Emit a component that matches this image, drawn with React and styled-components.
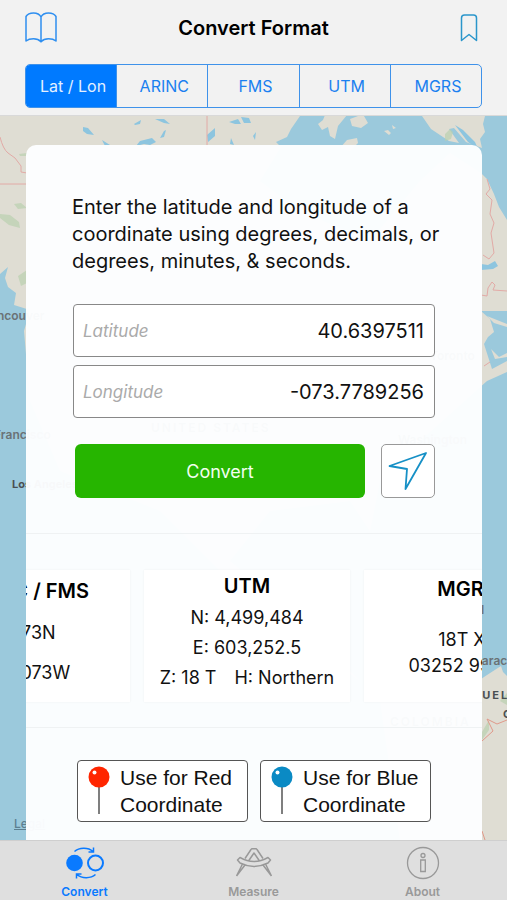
import { useState } from "react";
import styled, { createGlobalStyle } from "styled-components";

const formats = ["Lat / Lon", "ARINC", "FMS", "UTM", "MGRS"];

const results = [
  { title: "ARINC / FMS", rows: ["4073N", "40N073W"], line: 40, gap: 2, top: 1 },
  {
    title: "UTM",
    rows: ["N: 4,499,484", "E: 603,252.5", "Z: 18 T\u2003H: Northern"],
    line: 30,
    gap: 2,
    top: 1,
  },
  { title: "MGRS", rows: ["18T XL", "03252 99484"], line: 26, gap: 25, top: 6 },
];

const App = () => {
  const [format, setFormat] = useState("Lat / Lon");
  const [latitude, setLatitude] = useState("40.6397511");
  const [longitude, setLongitude] = useState("-073.7789256");
  const [tab, setTab] = useState("Convert");

  return (
    <>
      <GlobalStyle />
      <Screen>
        <Header>
          <TitleBar>
            <IconButton aria-label="Guide">
              <BookIcon />
            </IconButton>
            <h1>Convert Format</h1>
            <IconButton $end aria-label="Bookmarks">
              <BookmarkIcon />
            </IconButton>
          </TitleBar>
          <Segments>
            {formats.map((name) => (
              <Segment
                key={name}
                $active={name === format}
                aria-pressed={name === format}
                onClick={() => setFormat(name)}
              >
                {name}
              </Segment>
            ))}
          </Segments>
        </Header>
        <Content>
          <Map />
          <Legal href="#legal">Legal</Legal>
          <Card>
            <Form onSubmit={(e) => e.preventDefault()}>
              <Intro>
                Enter the latitude and longitude of a coordinate using degrees,
                decimals, or degrees, minutes, &amp; seconds.
              </Intro>
              <Field>
                <label htmlFor="latitude">Latitude</label>
                <input
                  id="latitude"
                  value={latitude}
                  onChange={(e) => setLatitude(e.target.value)}
                />
              </Field>
              <Field>
                <label htmlFor="longitude">Longitude</label>
                <input
                  id="longitude"
                  value={longitude}
                  onChange={(e) => setLongitude(e.target.value)}
                />
              </Field>
              <Actions>
                <ConvertButton type="submit">Convert</ConvertButton>
                <LocateButton type="button" aria-label="Use my location">
                  <ArrowIcon />
                </LocateButton>
              </Actions>
            </Form>
            <Results>
              {results.map((result) => (
                <Result
                  key={result.title}
                  $line={result.line}
                  $gap={result.gap}
                  $top={result.top}
                >
                  <h2>{result.title}</h2>
                  {result.rows.map((row) => (
                    <p key={row}>{row}</p>
                  ))}
                </Result>
              ))}
            </Results>
            <Pins>
              <PinButton>
                <PinIcon color="#ff2600" />
                <span>Use for Red Coordinate</span>
              </PinButton>
              <PinButton>
                <PinIcon color="#0a8ac4" />
                <span>Use for Blue Coordinate</span>
              </PinButton>
            </Pins>
          </Card>
        </Content>
        <TabBar>
          <Tab $active={tab === "Convert"} onClick={() => setTab("Convert")}>
            <ConvertIcon />
            Convert
          </Tab>
          <Tab $active={tab === "Measure"} onClick={() => setTab("Measure")}>
            <MeasureIcon />
            Measure
          </Tab>
          <Tab $active={tab === "About"} onClick={() => setTab("About")}>
            <AboutIcon />
            About
          </Tab>
        </TabBar>
      </Screen>
    </>
  );
};

//Icons
const BookIcon = () => (
  <svg width="32" height="32" fill="none" stroke="#2f8ff0" strokeWidth="1.5" strokeLinejoin="round">
    <path d="M16 5C14.500 2 12 1 8.500 1S2.500 2 1 4.500V29c2-1.700 4.500-2.300 7.500-2.300s5.500.8 7.500 3c2-2.200 4.500-3 7.500-3s5.500.6 7.500 2.300V4.500C29.500 2 27 1 23.500 1S17.500 2 16 5v25.500" />
  </svg>
);

const BookmarkIcon = () => (
  <svg width="18" height="28" fill="none" stroke="#2b96cb" strokeWidth="1.5" strokeLinejoin="round">
    <path d="M1.500 26.500V4q0-3 3-3h9q3 0 3 3v22.500L9 20.500z" />
  </svg>
);

const ArrowIcon = () => (
  <svg width="40" height="40" fill="none" stroke="#1690c6" strokeWidth="1.800" strokeLinejoin="round">
    <path d="M38 2 1.500 15l17.500 3L17.500 38z" />
  </svg>
);

const PinIcon = ({ color }) => (
  <svg width="22" height="50">
    <path d="M11 20v28" stroke="#555" strokeWidth="1.500" />
    <circle cx="11" cy="11" r="10.500" fill={color} />
    <circle cx="6.500" cy="6.500" r="2" fill="#fff" />
  </svg>
);

const ConvertIcon = () => (
  <svg width="40" height="34" fill="none" stroke="currentColor" strokeWidth="1.500">
    <circle cx="9.500" cy="17" r="8.300" fill="currentColor" stroke="none" />
    <circle cx="30.500" cy="17" r="7.500" strokeWidth="2" />
    <path d="M9.500 5.500C14 1.500 23 1 28 5.500M28.500 1.500v4.500h-5" />
    <path d="M30.500 28.500C26 32.500 17 33 12 28.500M11.500 32.500V28h5" />
  </svg>
);

const MeasureIcon = () => (
  <svg width="40" height="34" fill="none" stroke="currentColor" strokeWidth="1.500" strokeLinejoin="round">
    <path d="m11 12.500 6-9 1-.8h4l1 .8 6 9" />
    <path d="m14.500 15 5.500-8 5.500 8" />
    <path d="M3.500 14 6 11.500q14 8 28 0l2.500 2.500-2.500 3q-14 7-28 0z" />
    <path d="M8.500 18 2.500 30M11 19 2.500 30M31.500 18l6 12M29 19l8.500 11" />
  </svg>
);

const AboutIcon = () => (
  <svg width="40" height="34" fill="none" stroke="currentColor" strokeWidth="1.300">
    <circle cx="20" cy="17" r="15.500" />
    <circle cx="20" cy="9.500" r="2" />
    <path d="M17.700 14h4.600v11.500h-4.600z" />
  </svg>
);

const Map = () => (
  <MapCanvas viewBox="0 115 507 725" preserveAspectRatio="xMidYMin slice" aria-hidden="true">
    <g fill="#dfddd3">
      <path d="M0 115H300L291 128 287 136 276 141 281 146 260 180 300 210 370 240 420 180 450 152 481 172 487 178 494 193 499 206 507 219V310H481L490 318 494 331 488 336 484 343 492 368 507 360V371L487 380 420 440 380 480 370 530 350 500 270 510 230 560 300 620 360 680 250 600 160 510 60 470 30 400 24 330 30 309 14 304 16 292 8 286 5 277 8 266 0 273Z" />
      <path d="m318 123 5-4 2-5h22l-9 11-3 13-5-3-2-9-6 3zM350 118l8-3h6l4 7-7 5-9-2zM384 130l4-1 3 3-2 2zM392 124l4 3-3 1z" />
      <path d="M422 115h63l-2 8 2 8-5 7 2 9-16-6-12-14-5 1 10 14-10-2-18-12z" />
      <path d="m340 147 7-8 10-2 1 5-8 8z" />
      <path d="m380 700 30-35 71 13 6-4 14-9 2 6 4 4v165H400z" />
      <path d="m487 315 20 8v3l-13-4zM491 348l8 8 8-4v4l-12 2z" />
    </g>
    <g fill="#b9d0af" opacity="0.700">
      <path d="m0 213 10 1 9 7 1 6-11-3-9-7zM14 203l7-1 6 5-9 1zM19 153l8-1v3h-7zM18 275l9-6v13l-6 3zM445 133l5-5 3 3-2 7-6 2zM482 731l7-12v10l-7 10zM500 700l7-8v12z" />
    </g>
    <g fill="#8dc5df">
      <path d="m83 126 5 1 6 7-7-1-4-3zM134 123l7-4-1 4-5 1zM155 118h9l6 5-6-1zM136 145l4-5 12-3 4 4-6 3-6-1zM160 137l4-7 2-1-2 7zM102 139l8 5-5 1zM207 134l8-7v8l-7 6zM229 121l9-3 3 5h-6zM231 137l3 7-4-1zM241 116l8 1 2 5h-7zM253 135l3-4-1 8z" />
      <path d="m455 124 8 5 12 12 3 7-10-7zM481 263l7 1 7-4 3 5-5 3-12 1z" />
    </g>
    <g fill="none" stroke="#e2aaa6" strokeWidth="1">
      <path d="M0 136q3 12 8 16l7 5 6 8v6l6 1M0 183h30M207 115v34M487 178l3 10-4 5 6 6-2 14 4 9-3 10 3 20-5 6-6-4M481 294l6 1 1-8 4-6 3 3-2 5 14 1M484 365l6-4" />
      <path d="m482 740 11-10-6-12 10 5 10-4M482 830l3 9" stroke="#e0998a" />
    </g>
    <MapLabel x="-18" y="319">Vancouver</MapLabel>
    <MapLabel x="-31" y="438">San Francisco</MapLabel>
    <MapLabel x="12" y="487" $dark>Los Angeles</MapLabel>
    <MapLabel x="151" y="431" $spaced>UNITED STATES</MapLabel>
    <MapLabel x="430" y="359">Toronto</MapLabel>
    <MapLabel x="398" y="443">Washington</MapLabel>
    <MapLabel x="481" y="613">I</MapLabel>
    <MapLabel x="473" y="664">Caracas</MapLabel>
    <MapLabel x="435" y="698" $dark $spaced>VENEZUELA</MapLabel>
    <MapLabel x="503" y="717" $dark $spaced>GUYANA</MapLabel>
    <MapLabel x="390" y="725" $spaced>COLOMBIA</MapLabel>
  </MapCanvas>
);

//Styling
const GlobalStyle = createGlobalStyle`
  * {
    box-sizing: border-box;
    margin: 0;
    padding: 0;
  }
  body {
    font-family: Inter, "Liberation Sans", sans-serif;
    color: #111;
  }
  button, input {
    font: inherit;
    color: inherit;
    border: none;
    background: none;
  }
  button {
    cursor: pointer;
  }
  svg {
    display: block;
    flex: none;
  }
`;

const Screen = styled.div`
  min-height: 100vh;
  display: flex;
  flex-direction: column;
`;

const Header = styled.header`
  background: #f2f2f2;
  padding: 0 25px 7px;
  border-bottom: 1px solid #d9d9d9;
`;

const TitleBar = styled.div`
  height: 64px;
  padding-bottom: 9px;
  display: grid;
  grid-template-columns: 1fr auto 1fr;
  align-items: center;
  h1 {
    font-size: 20px;
    font-weight: 600;
    color: #000;
  }
`;

const IconButton = styled.button`
  justify-self: ${({ $end }) => ($end ? "end" : "start")};
  margin-right: ${({ $end }) => ($end ? "4px" : "0")};
`;

const Segments = styled.div`
  display: flex;
  height: 44px;
  border: 1px solid #3f92ea;
  border-radius: 5px;
  overflow: hidden;
`;

const Segment = styled.button`
  flex: 1;
  font-size: 16px;
  padding-left: 4px;
  color: ${({ $active }) => ($active ? "#e4f0ff" : "#1a80f0")};
  background: ${({ $active }) => ($active ? "#007aff" : "transparent")};
  & + & {
    border-left: 1px solid #3f92ea;
  }
`;

const Content = styled.main`
  flex: 1;
  display: flex;
  flex-direction: column;
  position: relative;
  overflow: hidden;
  padding: 29px 25px 0 26px;
  background: #9bc9dc;
`;

const MapCanvas = styled.svg`
  position: absolute;
  top: 0;
  left: 0;
  width: 100%;
  height: 100%;
`;

const MapLabel = styled.text`
  font-size: ${({ $dark }) => ($dark ? 11 : 12)}px;
  font-weight: ${({ $dark }) => ($dark ? 700 : 600)};
  fill: ${({ $dark }) => ($dark ? "#4a4f52" : "#6a7276")};
  letter-spacing: ${({ $spaced }) => ($spaced ? "2px" : "normal")};
`;

const Legal = styled.a`
  position: absolute;
  left: 14px;
  bottom: 9px;
  font-size: 12px;
  font-weight: 500;
  color: #5c7f90;
`;

const Card = styled.section`
  flex: 1;
  position: relative;
  background: rgba(253, 254, 255, 0.97);
  border-radius: 10px 10px 0 0;
  padding-bottom: 18px;
`;

const Form = styled.form`
  padding: 49px 47px 35px;
  border-bottom: 1px solid #eff2f3;
`;

const Intro = styled.p`
  font-size: 20px;
  line-height: 27px;
  margin: 0 -16px 29px -1px;
`;

const Field = styled.div`
  display: flex;
  align-items: center;
  height: 53px;
  margin-bottom: 8px;
  padding: 0 10px 0 9px;
  background: #fff;
  border: 1px solid #888;
  border-radius: 4px;
  label {
    font-size: 17px;
    font-style: italic;
    color: #aaa;
  }
  input {
    flex: 1;
    min-width: 0;
    font-size: 20px;
    text-align: right;
    outline: none;
  }
`;

const Actions = styled.div`
  display: flex;
  gap: 16px;
  padding: 18px 0 0 2px;
`;

const ConvertButton = styled.button`
  flex: 1;
  height: 54px;
  border-radius: 6px;
  background: #26b500;
  color: #f2fff0;
  font-size: 18px;
`;

const LocateButton = styled.button`
  width: 54px;
  height: 54px;
  display: flex;
  align-items: center;
  justify-content: center;
  background: #fff;
  border: 1px solid #999;
  border-radius: 5px;
`;

const Results = styled.div`
  display: flex;
  justify-content: center;
  gap: 14px;
  padding: 36px 14px 25px 0;
  overflow: hidden;
  border-bottom: 1px solid #eff2f3;
`;

const Result = styled.article`
  flex: none;
  width: 206px;
  height: 132px;
  padding-top: ${({ $top }) => $top}px;
  text-align: center;
  background: #fff;
  box-shadow: 0 0 2px rgba(0, 0, 0, 0.06);
  h2 {
    font-size: 20px;
    font-weight: 600;
    line-height: ${({ $line }) => $line}px;
    margin-bottom: ${({ $gap }) => $gap}px;
    color: #000;
  }
  p {
    font-size: 18px;
    line-height: ${({ $line }) => $line}px;
  }
`;

const Pins = styled.div`
  display: flex;
  gap: 12px;
  padding: 32px 51px 0;
`;

const PinButton = styled.button`
  flex: 1;
  height: 62px;
  display: flex;
  align-items: center;
  gap: 10px;
  padding: 0 8px 0 10px;
  background: #fff;
  border: 1px solid #555;
  border-radius: 4px;
  font-family: "Liberation Sans", Arial, sans-serif;
  font-size: 21px;
  line-height: 27px;
  text-align: left;
`;

const TabBar = styled.nav`
  display: flex;
  height: 60px;
  background: #dfdfdf;
  border-top: 1px solid #cfcfcf;
`;

const Tab = styled.button`
  flex: 1;
  display: flex;
  flex-direction: column;
  align-items: center;
  gap: 4px;
  padding-top: 5px;
  font-size: 12px;
  font-weight: 600;
  color: ${({ $active }) => ($active ? "#0a7aff" : "#999")};
`;

export default App;
